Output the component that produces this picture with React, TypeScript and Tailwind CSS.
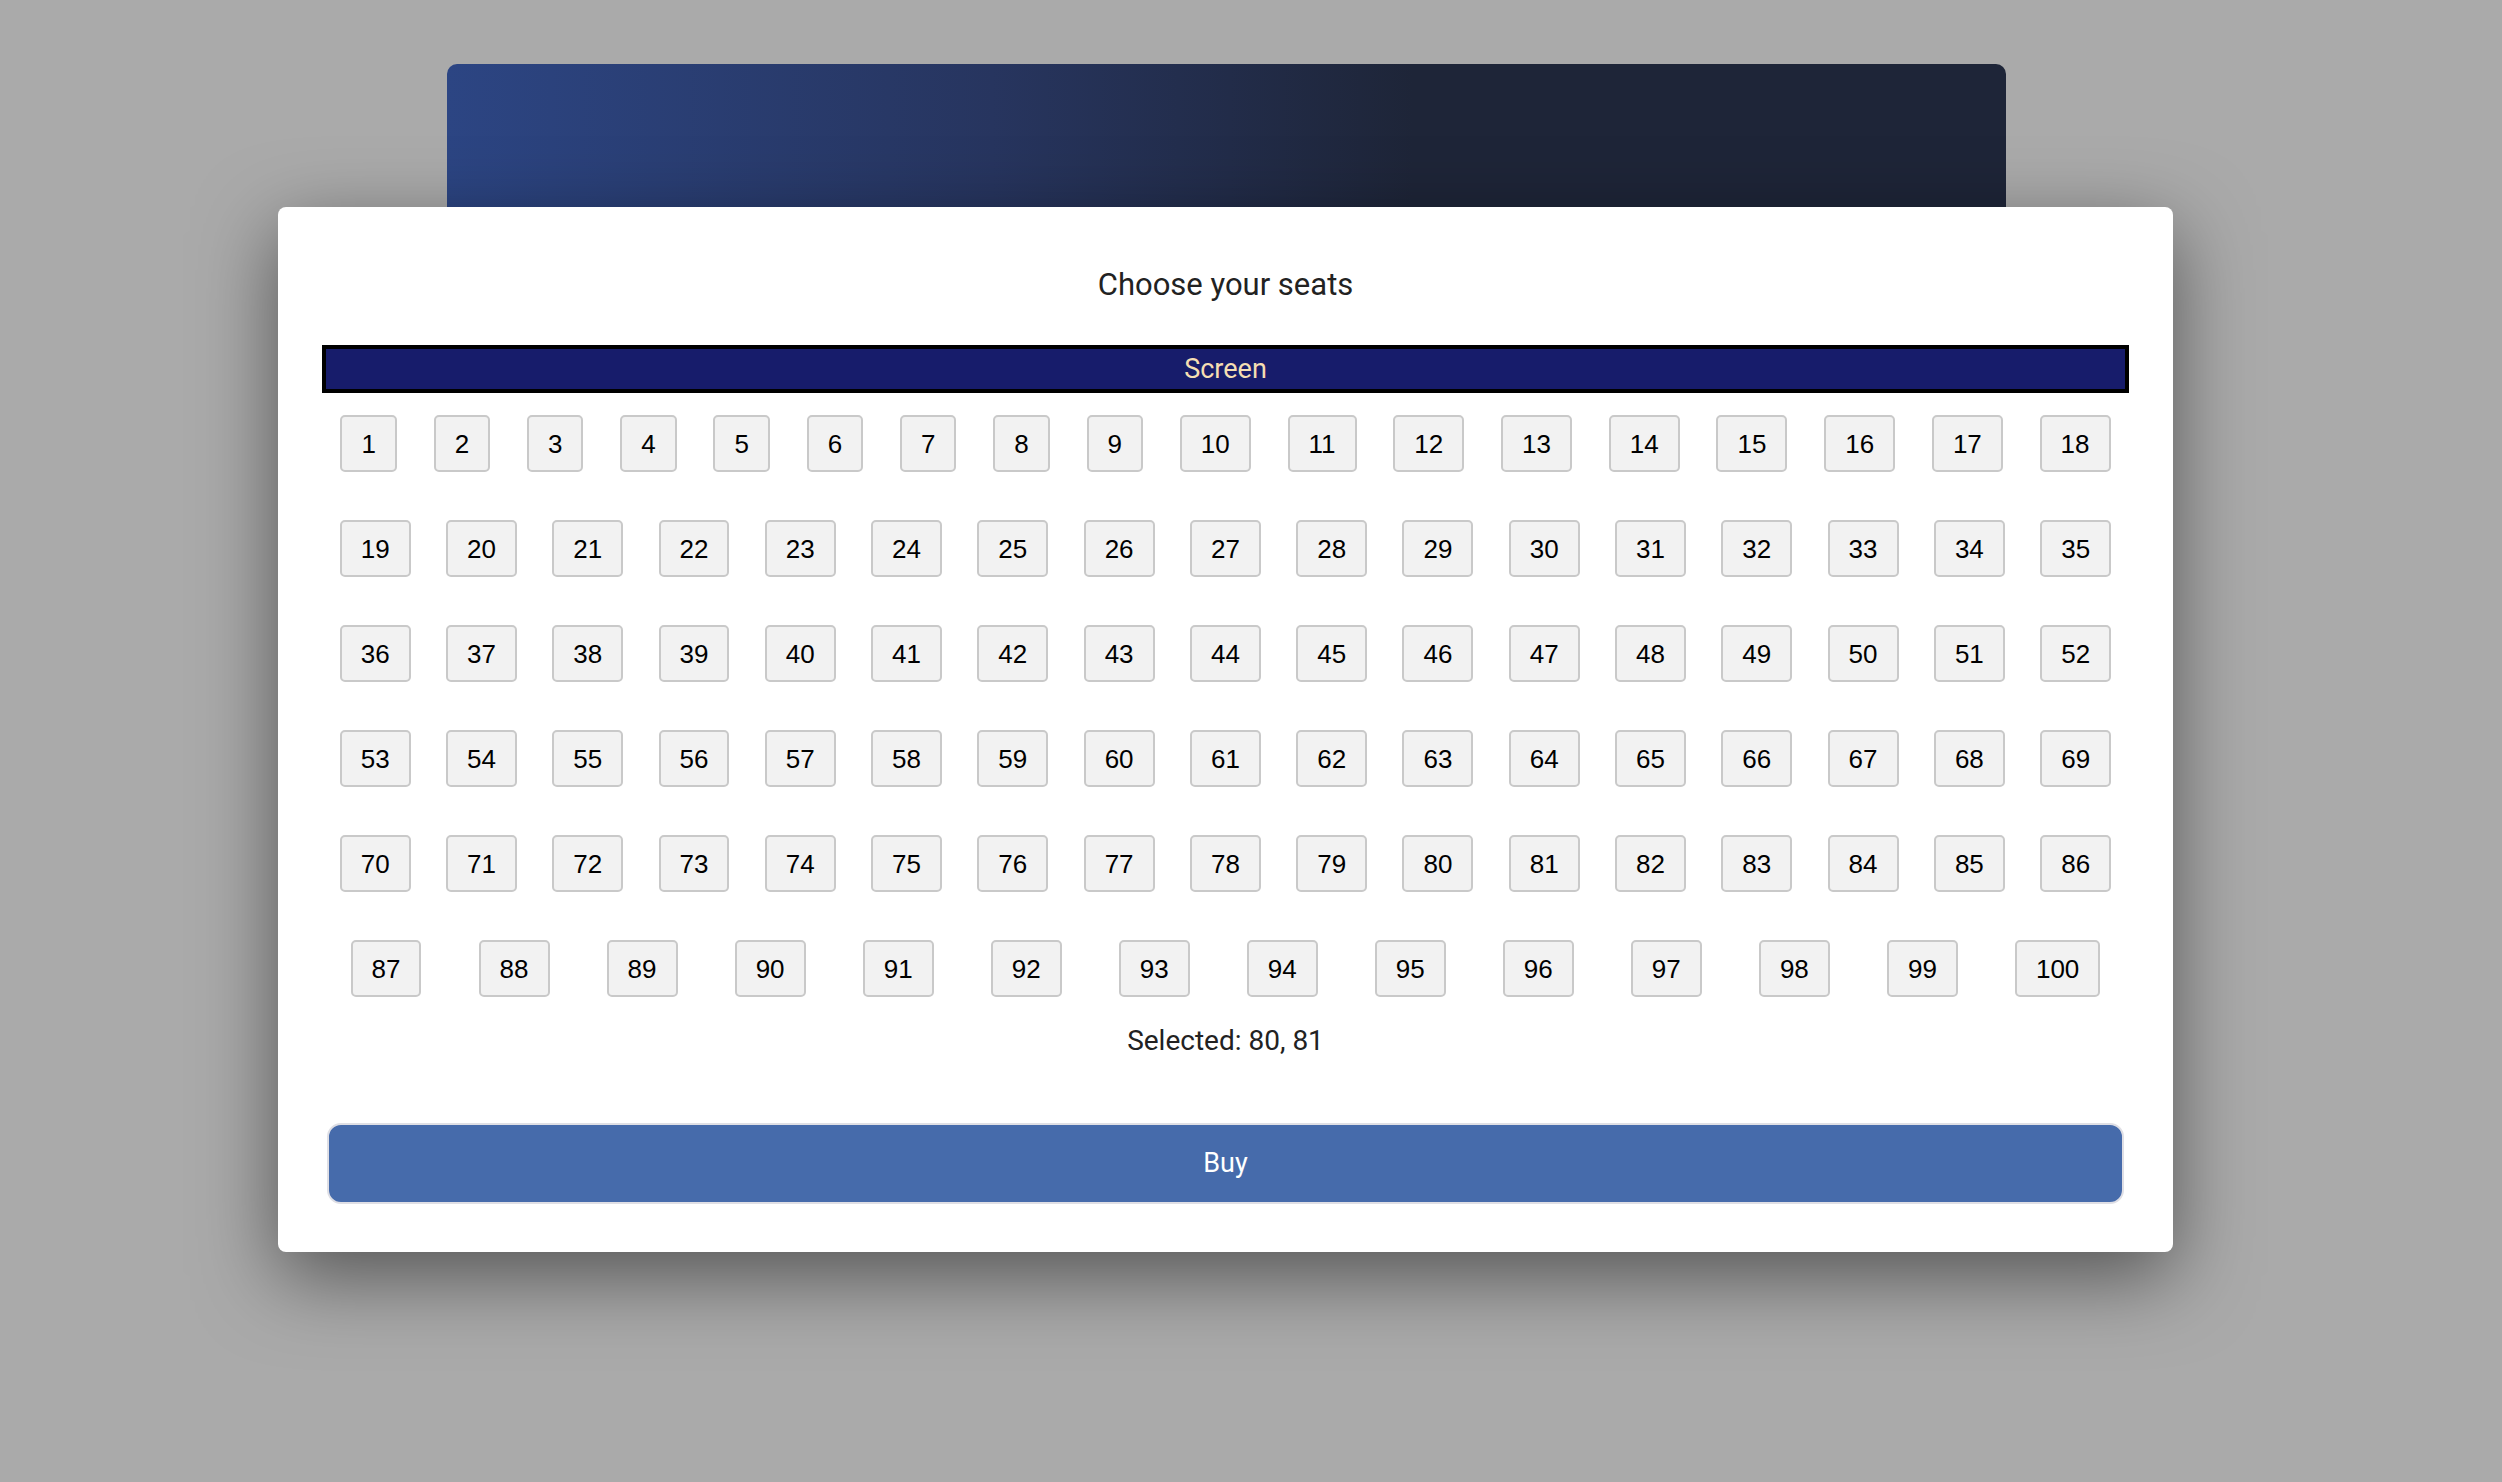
const rowSizes = [18, 17, 17, 17, 17, 14];

const buildRows = () => {
  const rows: number[][] = [];
  let n = 1;
  rowSizes.forEach((size) => {
    const row: number[] = [];
    for (let i = 0; i < size; i++) row.push(n++);
    rows.push(row);
  });
  return rows;
};

const Seat = ({ num }: { num: number }) => (
  <button
    type="button"
    className="h-[57px] px-[19px] flex items-center justify-center bg-[#f2f2f2] border-2 border-[#c9c9c9] rounded-[5px] text-[26px] leading-none text-black font-['Liberation_Sans',Arial,sans-serif]"
  >
    {num}
  </button>
);

const App = () => {
  const rows = buildRows();
  const selected = [80, 81];

  return (
    <div className="relative w-full min-h-[1482px] bg-[#aaaaaa] overflow-hidden font-['Roboto',sans-serif]">
      {/* page behind the dialog */}
      <div className="pt-[64px] pl-[447px]">
        <div className="w-[1559px] h-[420px] rounded-t-[10px] bg-[linear-gradient(to_right,#2c4583_0%,#27355f_35%,#1e2538_62%,#1e2538_100%)]" />
      </div>

      {/* seat picker dialog */}
      <div className="absolute left-[278px] top-[207px] w-[1895px] bg-white rounded-[8px] px-[44px] pt-[60px] pb-[48px] shadow-[0_24px_80px_rgba(0,0,0,0.5)]">
        <h2 className="text-center text-[31px] leading-[36px] text-[#222222] font-normal">
          Choose your seats
        </h2>

        <div className="mt-[42px] h-[48px] border-4 border-black bg-[#171c6b] flex items-center justify-center text-[27px] text-[#f5deb3]">
          Screen
        </div>

        <div className="mt-[22px] flex flex-col gap-[48px]">
          {rows.map((row, i) => (
            <div key={i} className="flex justify-around">
              {row.map((num) => (
                <Seat key={num} num={num} />
              ))}
            </div>
          ))}
        </div>

        <p className="mt-[27px] text-center text-[28px] leading-[33px] text-[#222222]">
          Selected: {selected.join(", ")}
        </p>

        <div className="mt-[66px] px-[5px]">
          <button
            type="button"
            className="w-full h-[81px] bg-[#466bab] border-2 border-[#dfdfe5] rounded-[14px] text-white text-[27px]"
          >
            Buy
          </button>
        </div>
      </div>
    </div>
  );
};

export default App;
